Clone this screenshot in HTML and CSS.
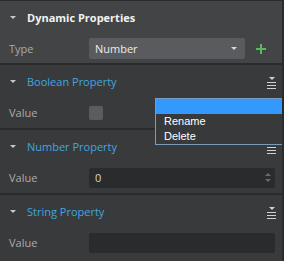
FILE: index.html
```html
<!DOCTYPE html>
<html lang="en">
<head>
    <meta charset="UTF-8">
    <meta name="viewport" content="width=device-width, initial-scale=1.0">
    <title>Dynamic Properties</title>
    <link rel="stylesheet" href="styles.css">
</head>
<body>
    <div class="panel">
        <div class="section main">
            <div class="head">
                <span class="caret"></span>
                <span class="title">Dynamic Properties</span>
            </div>
            <div class="row">
                <span class="label">Type</span>
                <div class="select">
                    <span>Number</span>
                    <span class="select-arrow"></span>
                </div>
                <span class="plus"></span>
            </div>
        </div>

        <div class="section prop">
            <div class="head">
                <span class="caret"></span>
                <span class="name">Boolean Property</span>
                <span class="menu-icon"><i></i><b></b><b></b><b></b></span>
            </div>
            <div class="row">
                <span class="label">Value</span>
                <span class="checkbox"></span>
            </div>
        </div>

        <div class="section prop">
            <div class="head">
                <span class="caret"></span>
                <span class="name">Number Property</span>
                <span class="menu-icon"><i></i><b></b><b></b><b></b></span>
            </div>
            <div class="row">
                <span class="label">Value</span>
                <div class="field">
                    <span>0</span>
                    <span class="spin"><i class="up"></i><i class="down"></i></span>
                </div>
            </div>
        </div>

        <div class="section prop">
            <div class="head">
                <span class="caret"></span>
                <span class="name">String Property</span>
                <span class="menu-icon"><i></i><b></b><b></b><b></b></span>
            </div>
            <div class="row">
                <span class="label">Value</span>
                <div class="field"></div>
            </div>
        </div>

        <ul class="context-menu">
            <li class="active"></li>
            <li>Rename</li>
            <li>Delete</li>
        </ul>
    </div>
</body>
</html>
```

FILE: styles.css
```css
:root {
    --main-bg: #434446;
    --prop-bg: #393a3c;
    --line: #2a2b2d;
    --label: #aaabad;
    --blue: #3fa7e0;
}

* {
    box-sizing: border-box;
    margin: 0;
    padding: 0;
}

body {
    background: var(--prop-bg);
    font-family: 'Open Sans', 'Liberation Sans', sans-serif;
    font-size: 11px;
    color: #e6e6e6;
}

.panel {
    position: relative;
    width: 284px;
    height: 261px;
    border-top: 1px solid var(--line);
    border-right: 2px solid var(--line);
    overflow: hidden;
}

.section {
    height: 65px;
    border-bottom: 2px solid var(--line);
}

.section.main {
    height: 64px;
    background: var(--main-bg);
}

.section.prop {
    background: var(--prop-bg);
}

.section:last-of-type {
    border-bottom: none;
}

.head {
    display: flex;
    align-items: center;
    height: 32px;
    padding-left: 10px;
    padding-right: 6px;
}

.caret {
    width: 0;
    height: 0;
    border-left: 3px solid transparent;
    border-right: 3px solid transparent;
    border-top: 3px solid #c8c8c8;
    margin-right: 11px;
}

.title {
    font-weight: 700;
    color: #f2f2f2;
}

.name {
    color: var(--blue);
    flex: 1;
}

.menu-icon {
    display: flex;
    flex-direction: column;
    align-items: center;
    gap: 2px;
    width: 9px;
    margin-top: 4px;
}

.menu-icon i {
    width: 0;
    height: 0;
    border-left: 3px solid transparent;
    border-right: 3px solid transparent;
    border-top: 3px solid #d0d0d0;
    border-bottom: none;
    margin-bottom: 0;
}

.menu-icon b {
    display: block;
    width: 9px;
    height: 1px;
    background: #d0d0d0;
}

.row {
    display: flex;
    align-items: center;
    height: 31px;
    padding-left: 9px;
    padding-right: 7px;
}

.label {
    width: 80px;
    color: var(--label);
}

.select {
    display: flex;
    align-items: center;
    justify-content: space-between;
    width: 156px;
    height: 21px;
    padding: 0 8px 0 6px;
    background: #5a5b5e;
    border-radius: 2px;
    color: #ececec;
}

.select-arrow {
    width: 0;
    height: 0;
    border-left: 3px solid transparent;
    border-right: 3px solid transparent;
    border-top: 3px solid #d8d8d8;
}

.plus {
    position: relative;
    width: 10px;
    height: 10px;
    margin-left: 11px;
}

.plus::before,
.plus::after {
    content: "";
    position: absolute;
    background: #5cb85c;
}

.plus::before {
    left: 0;
    top: 4px;
    width: 10px;
    height: 2px;
}

.plus::after {
    left: 4px;
    top: 0;
    width: 2px;
    height: 10px;
}

.checkbox {
    width: 14px;
    height: 14px;
    background: #5b5c5f;
    border-radius: 2px;
}

.field {
    display: flex;
    align-items: center;
    justify-content: space-between;
    flex: 1;
    height: 20px;
    padding: 0 4px 0 6px;
    background: #2a2b2d;
    border-radius: 2px;
    color: #d8d8d8;
}

.spin {
    display: flex;
    flex-direction: column;
    gap: 3px;
}

.spin i {
    width: 0;
    height: 0;
    border-left: 3px solid transparent;
    border-right: 3px solid transparent;
}

.spin .up {
    border-bottom: 3px solid #6a6b6e;
}

.spin .down {
    border-top: 3px solid #6a6b6e;
}

.context-menu {
    position: absolute;
    left: 155px;
    top: 97px;
    width: 128px;
    list-style: none;
    background: #38393b;
    border: 1px solid #7b9bba;
    font-family: 'Liberation Sans', Arial, sans-serif;
    font-size: 11px;
    color: #ffffff;
}

.context-menu li {
    height: 15px;
    line-height: 15px;
    padding-left: 8px;
}

.context-menu li.active {
    background: #3399ff;
}

.context-menu li:last-child {
    height: 15px;
}
```
